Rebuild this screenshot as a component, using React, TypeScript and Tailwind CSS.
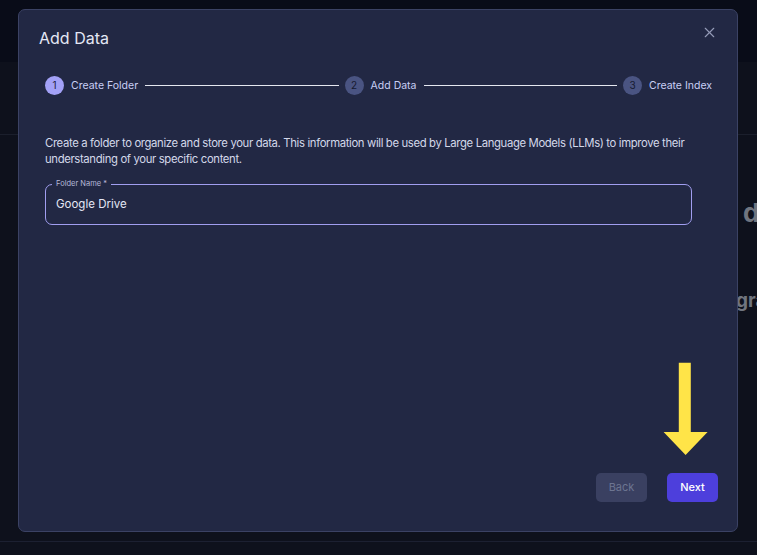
import { X } from 'lucide-react'

const Step = ({ n, label, active }: { n: number; label: string; active?: boolean }) => (
  <div className="flex items-center gap-[7px] shrink-0">
    <div
      className={
        active
          ? 'w-[19px] h-[19px] rounded-full bg-[#a3a1f7] text-[#1e2240] flex items-center justify-center text-[10px]'
          : 'w-[19px] h-[19px] rounded-full bg-[#4a5482] text-[#161a30] flex items-center justify-center text-[10px]'
      }
    >
      {n}
    </div>
    <span className="text-[10.5px] text-[#c9cff5]">{label}</span>
  </div>
)

const Connector = () => <div className="flex-1 h-px bg-[#e5e7f0] ml-[7px] mr-[6px]" />

export default function App() {
  return (
    <div
      className="relative w-[757px] h-[555px] overflow-hidden bg-[#0e111c] text-white"
      style={{ fontFamily: 'Inter, "Noto Sans", sans-serif' }}
    >
      {/* page behind the dialog */}
      <div className="h-[62px] bg-[#090c18]" />
      <div className="h-[73px] border-b border-[#1b1f2c]" />
      <div className="h-[407px] border-b border-[#1c2031] flex flex-col">
        <div className="pl-[743px] pt-[62px] text-[26px] font-bold text-[#70757f] whitespace-nowrap leading-8">d</div>
        <div className="pl-[736px] pt-[60px] text-[19px] font-bold text-[#70757f] whitespace-nowrap leading-6">gra</div>
      </div>

      {/* dialog */}
      <div className="absolute left-[18px] top-[9px] w-[720px] h-[523px] rounded-[7px] border border-[#3b4264] bg-[#222844] flex flex-col">
        <div className="flex items-center justify-between pl-5 pr-5 pt-4">
          <h2 className="text-[16px] leading-6 text-[#e4e7f5]">Add Data</h2>
          <X className="w-[17px] h-[17px] text-[#959cb8] -mt-[11px] -mr-[1px]" strokeWidth={1.6} />
        </div>

        <div className="flex items-center pl-[26px] pr-[25px] mt-[26px]">
          <Step n={1} label="Create Folder" active />
          <Connector />
          <Step n={2} label="Add Data" />
          <Connector />
          <Step n={3} label="Create Index" />
        </div>

        <p className="pl-[26px] pr-[20px] mt-[40px] text-[11.3px] tracking-[-0.35px] leading-4 text-[#d4d8ea]">
          Create a folder to organize and store your data. This information will be used by Large Language Models (LLMs) to improve their
          understanding of your specific content.
        </p>

        <div className="relative ml-[26px] mt-[17px] w-[647px] h-[41px] rounded-[7px] border border-[#a19ef0] flex items-center px-[10px]">
          <span className="absolute -top-[6px] left-[6px] px-[4px] bg-[#222844] text-[7.5px] leading-[10px] text-[#b5b9d8]">
            Folder Name *
          </span>
          <span className="text-[11.5px] text-[#e4e7f5]">Google Drive</span>
        </div>

        <div className="flex-1" />

        <div className="flex justify-end gap-5 pr-[19px] pb-[29px]">
          <button className="w-[51px] h-[29px] rounded-[5px] bg-[#3a4061] text-[11px] text-[#6d7591]">Back</button>
          <button className="w-[51px] h-[29px] rounded-[5px] bg-[#4d3fdc] text-[11px] font-medium text-white">Next</button>
        </div>

        {/* annotation arrow */}
        <svg className="absolute left-[644px] top-[352px]" width="46" height="94" viewBox="0 0 46 94">
          <path d="M15.8 0.7 H27.8 V70 H44.6 L22.6 93 L0.6 70 H15.8 Z" fill="#ffe448" />
        </svg>
      </div>
    </div>
  )
}
